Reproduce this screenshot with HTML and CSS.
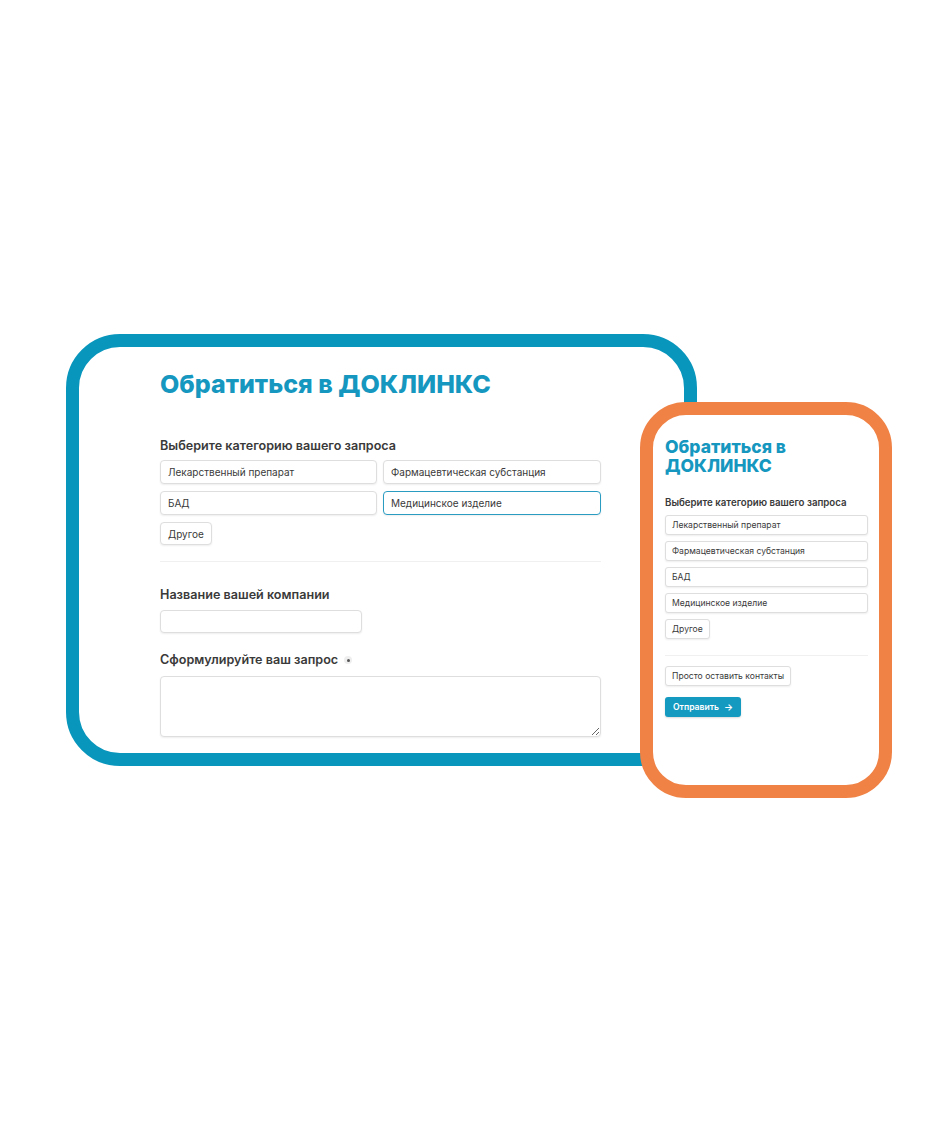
FILE: index.html
```html
<!DOCTYPE html>
<html lang="ru">
<head>
<meta charset="utf-8">
<title>Обратиться в ДОКЛИНКС</title>
<link rel="stylesheet" href="styles.css">
</head>
<body>
<main class="stage">
  <section class="card-desktop">
    <h1 class="title">Обратиться в ДОКЛИНКС</h1>
    <div class="field field-first">
      <div class="label">Выберите категорию вашего запроса</div>
      <div class="choice-grid">
        <button class="choice">Лекарственный препарат</button>
        <button class="choice">Фармацевтическая субстанция</button>
        <button class="choice">БАД</button>
        <button class="choice choice-selected">Медицинское изделие</button>
        <button class="choice choice-auto">Другое</button>
      </div>
    </div>
    <hr class="divider">
    <div class="field field-company">
      <div class="label">Название вашей компании</div>
      <input class="text-input" type="text">
    </div>
    <div class="field field-request">
      <div class="label">Сформулируйте ваш запрос <span class="req-dot"></span></div>
      <textarea class="text-area"></textarea>
    </div>
  </section>

  <section class="card-phone">
    <h1 class="m-title">Обратиться в ДОКЛИНКС</h1>
    <div class="m-label">Выберите категорию вашего запроса</div>
    <div class="m-list">
      <button class="m-choice">Лекарственный препарат</button>
      <button class="m-choice">Фармацевтическая субстанция</button>
      <button class="m-choice">БАД</button>
      <button class="m-choice">Медицинское изделие</button>
      <button class="m-choice m-auto">Другое</button>
    </div>
    <hr class="m-divider">
    <button class="m-choice m-auto m-contacts">Просто оставить контакты</button>
    <button class="m-send">Отправить <span class="arrow">→</span></button>
  </section>
</main>
</body>
</html>
```

FILE: styles.css
```css
* { box-sizing: border-box; }

html, body {
  margin: 0;
  padding: 0;
  background: #ffffff;
}

body {
  font-family: Inter, "Noto Sans", "Liberation Sans", sans-serif;
  color: #333333;
}

.stage {
  position: relative;
  width: 948px;
  height: 1132px;
  padding: 334px 0 0 66px;
}

/* ---------- desktop card ---------- */
.card-desktop {
  width: 631px;
  height: 432px;
  border: 13px solid #0896bd;
  border-radius: 54px;
  background: #fff;
  padding: 22px 0 0 81px;
  overflow: hidden;
}

.title {
  margin: 0;
  font-size: 25px;
  line-height: 30px;
  font-weight: 800;
  color: #1597bf;
  letter-spacing: 0;
}

.field { width: 441px; }
.field-first { margin-top: 38px; }

.label {
  font-size: 12.6px;
  line-height: 18px;
  font-weight: 600;
  color: #3a3a3a;
  display: flex;
  align-items: center;
  gap: 6px;
}

.choice-grid {
  margin-top: 5px;
  display: grid;
  grid-template-columns: 217px 218px;
  column-gap: 6px;
  row-gap: 7px;
}

.choice {
  height: 24px;
  padding: 0 7px;
  border: 1px solid #dedede;
  border-radius: 4px;
  background: #fff;
  box-shadow: 0 1px 2px rgba(0,0,0,0.07);
  font-family: inherit;
  font-size: 10px;
  color: #3a3a3a;
  text-align: left;
}

.choice-selected {
  border: 1.5px solid #2a9cc2;
}

.choice-auto {
  justify-self: start;
  height: 23px;
}

.divider {
  margin: 16px 0 0;
  width: 441px;
  border: 0;
  border-top: 1px solid #f0f0f0;
}

.field-company { margin-top: 24px; }
.field-request { margin-top: 18px; }

.text-input {
  display: block;
  margin-top: 6px;
  width: 202px;
  height: 23px;
  border: 1px solid #dedede;
  border-radius: 4px;
  box-shadow: 0 1px 2px rgba(0,0,0,0.07);
  background: #fff;
}

.text-area {
  display: block;
  margin-top: 7px;
  width: 441px;
  height: 61px;
  border: 1px solid #dedede;
  border-radius: 4px;
  box-shadow: 0 1px 2px rgba(0,0,0,0.07);
  background: #fff;
  resize: vertical;
}

.req-dot {
  width: 8px;
  height: 8px;
  border-radius: 50%;
  background: #eeeeee;
  display: inline-flex;
  align-items: center;
  justify-content: center;
}
.req-dot::after {
  content: "";
  width: 3px;
  height: 3px;
  border-radius: 50%;
  background: #555;
}

/* ---------- phone card ---------- */
.card-phone {
  position: absolute;
  left: 640px;
  top: 402px;
  width: 252px;
  height: 396px;
  border: 13px solid #f08245;
  border-radius: 46px;
  background: #fff;
  padding: 22px 11px 0 12px;
  display: flex;
  flex-direction: column;
  align-items: flex-start;
}

.m-title {
  margin: 0;
  font-size: 17.5px;
  line-height: 19px;
  font-weight: 800;
  color: #1597bf;
}

.m-label {
  margin-top: 21px;
  font-size: 9.7px;
  line-height: 13px;
  font-weight: 600;
  color: #3a3a3a;
}

.m-list {
  margin-top: 6px;
  width: 203px;
  display: flex;
  flex-direction: column;
  align-items: stretch;
  gap: 6px;
}

.m-choice {
  height: 20px;
  padding: 0 6px;
  border: 1px solid #dedede;
  border-radius: 3px;
  background: #fff;
  box-shadow: 0 1px 2px rgba(0,0,0,0.07);
  font-family: inherit;
  font-size: 8.6px;
  color: #3a3a3a;
  text-align: left;
}

.m-auto { align-self: flex-start; }

.m-divider {
  margin: 16px 0 0;
  width: 203px;
  border: 0;
  border-top: 1px solid #f0f0f0;
}

.m-contacts { margin-top: 10px; }

.m-send {
  margin-top: 11px;
  height: 20px;
  padding: 0 8px;
  border: 0;
  border-radius: 3px;
  background: #1499c1;
  box-shadow: 0 1px 2px rgba(0,0,0,0.15);
  color: #fff;
  font-family: inherit;
  font-size: 8.6px;
  font-weight: 600;
  display: flex;
  align-items: center;
  gap: 5px;
}
.arrow { font-size: 9.5px; }
```
